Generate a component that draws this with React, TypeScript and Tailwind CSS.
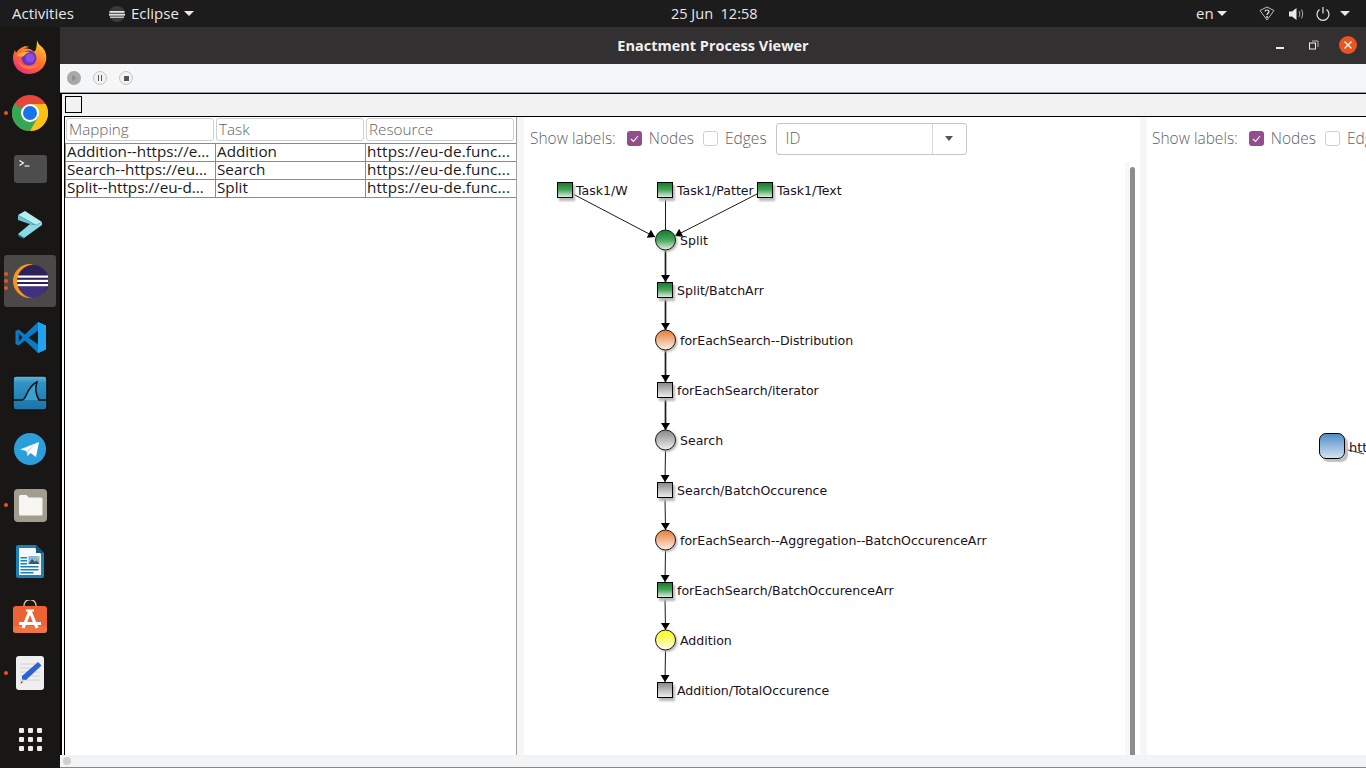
import React from "react";

const ui = { fontFamily: '"Open Sans", "Noto Sans", sans-serif' };

function Firefox() {
  return (
    <svg width="36" height="36" viewBox="0 0 36 36">
      <defs>
        <linearGradient id="ff1" x1="0.8" y1="0" x2="0.2" y2="1">
          <stop offset="0" stopColor="#ffd43a" />
          <stop offset="0.45" stopColor="#ff7a2a" />
          <stop offset="1" stopColor="#f2257a" />
        </linearGradient>
      </defs>
      <path d="M25 1c1 4 3 5 6 8 3 4 4 8 3 13-2 8-9 13-17 13C8 35 1 28 1 19c0-3 1-6 2-8l1 3c1-2 3-4 5-5 3-2 6-2 8-1-2 0-4 1-5 2 3-1 7 0 9 2 3 3 4-6 4-11z" fill="url(#ff1)" />
      <circle cx="17" cy="19" r="7.5" fill="#6a33c4" />
      <circle cx="18" cy="19" r="4.5" fill="#8a4fe0" />
      <path d="M5 16c3-3 8-4 13-3-3 1-5 2-6 4-2 1-4 1-7-1z" fill="#ffa930" />
      <path d="M6 22c1 5 6 8 11 8 4 0 8-2 10-6-3 3-7 4-11 3-4 0-7-2-10-5z" fill="#ff8a20" opacity="0.75" />
    </svg>
  );
}

function Chrome() {
  return (
    <svg width="36" height="36" viewBox="0 0 36 36">
      <circle cx="18" cy="18" r="18" fill="#e8453c" />
      <path d="M18 18 L2.4 9 A18 18 0 0 0 18 36 L 27 27 Z" fill="#34a853" />
      <path d="M18 9 L33.6 9 A18 18 0 0 1 18 36 L 26 22 Z" fill="#fbc117" />
      <circle cx="18" cy="18" r="9" fill="#fff" />
      <circle cx="18" cy="18" r="7" fill="#1a73e8" />
    </svg>
  );
}

function Terminal() {
  return (
    <div className="relative h-[28px] w-[33px] rounded-[3px] bg-[#4d4d4d]">
      <svg width="33" height="28" viewBox="0 0 33 28" className="absolute left-0 top-0">
        <path d="M5.5 5.5l4 2.5-4 2.5" stroke="#fff" strokeWidth="1.1" fill="none" />
        <path d="M10.5 11h5" stroke="#fff" strokeWidth="1.1" />
      </svg>
    </div>
  );
}

function Prompt() {
  return (
    <svg width="26" height="28" viewBox="0 0 26 28">
      <path d="M1 4L8 0L25 11L19 14z" fill="#b5edf0" />
      <path d="M1 4L19 14L11 12.500L1 9z" fill="#63c3d3" />
      <path d="M25 11V14L7 27L1 23L13 13L19 14z" fill="#86dbe6" />
      <path d="M1 23L7 27V28L1 25z" fill="#2a6f88" />
    </svg>
  );
}

function Eclipse() {
  return (
    <svg width="36" height="36" viewBox="0 0 36 36">
      <path d="M18 1A17 17 0 0 0 18 35c1 0 2 0 3-.2A17 17 0 0 1 21 1.2C20 1 19 1 18 1z" fill="#f7941e" />
      <circle cx="21" cy="18" r="16" fill="#2c2255" />
      <path d="M7 21h28a14 14 0 0 1-28 0z" fill="#473788" opacity="0.8" />
      <rect x="5.5" y="12.5" width="31" height="2.2" fill="#fff" />
      <rect x="5" y="16.8" width="32" height="2.2" fill="#fff" />
      <rect x="5.5" y="21" width="31" height="2.2" fill="#fff" />
    </svg>
  );
}

function VSCode() {
  return (
    <svg width="33" height="33" viewBox="0 0 33 33">
      <path d="M24 1L11 13.500 4.500 8.500 1.500 10v13l3 1.500 6.500-5L24 32l8-3.500V4.500z" fill="#0a7cc7" />
      <path d="M24 1l8 3.500v24L24 32z" fill="#20a3ef" />
      <path d="M24 9.500L14.500 16.500 24 23.500z" fill="#1a1a1a" />
      <path d="M4.800 12.500L8.500 16.500 4.800 20.500z" fill="#1a1a1a" />
    </svg>
  );
}

function Wireshark() {
  return (
    <svg width="36" height="36" viewBox="0 0 36 36">
      <defs>
        <linearGradient id="ws" x1="0" y1="0" x2="0" y2="1">
          <stop offset="0" stopColor="#6ab6da" />
          <stop offset="0.2" stopColor="#2f93c6" />
          <stop offset="1" stopColor="#1b74a8" />
        </linearGradient>
      </defs>
      <rect x="1" y="1" width="34" height="34" rx="3" fill="url(#ws)" stroke="#111" strokeWidth="1.600" />
      <path d="M10 25c5 0 4-13 15-18-2 6-1 13 2 18z" fill="#3ba0d2" />
      <path d="M1 25h9c5 0 4-13 15-18-2 6-1 13 2 18h8" fill="none" stroke="#111" strokeWidth="1.500" />
    </svg>
  );
}

function Telegram() {
  return (
    <svg width="32" height="32" viewBox="0 0 32 32">
      <circle cx="16" cy="16" r="16" fill="#2b9fd9" />
      <path d="M6 16.500L25 9l-3 15-5.500-4-3 3-1-5z" fill="#fff" />
      <path d="M12.500 18l9-7-7 8-1 4z" fill="#c5dff0" />
    </svg>
  );
}

function Files() {
  return (
    <div className="flex h-[33px] w-[33px] items-center justify-center rounded-[4px] bg-[#a39d90]">
      <svg width="25" height="22" viewBox="0 0 25 22">
        <path d="M1 2.500A1.500 1.500 0 0 1 2.500 1h6l2 2.500H23a1.500 1.500 0 0 1 1.500 1.500v15a1.500 1.500 0 0 1-1.500 1.500H2.500A1.500 1.500 0 0 1 1 20z" fill="#f8f6f2" />
      </svg>
    </div>
  );
}

function Writer() {
  return (
    <svg width="28" height="33" viewBox="0 0 28 33">
      <path d="M2 0h18l8 8v23a2 2 0 0 1-2 2H2a2 2 0 0 1-2-2V2a2 2 0 0 1 2-2z" fill="#1b7fb8" />
      <path d="M3 3h16l6 6v21H3z" fill="#f4f8fb" />
      <path d="M20 0l8 8h-8z" fill="#15567e" />
      <rect x="4.500" y="12" width="6.500" height="1.500" fill="#1b7fb8" />
      <rect x="4.500" y="15" width="6.500" height="1.500" fill="#1b7fb8" />
      <rect x="4.500" y="18" width="6.500" height="1.500" fill="#1b7fb8" />
      <rect x="4.500" y="21" width="18" height="1.500" fill="#1b7fb8" />
      <rect x="4.500" y="24" width="18" height="1.500" fill="#1b7fb8" />
      <rect x="4.500" y="27" width="13" height="1.500" fill="#1b7fb8" />
      <rect x="12.500" y="11" width="11" height="8" fill="#8ab8d2" />
      <path d="M12.500 19l3.500-5 3 3 1.500-1.500 3 3.500z" fill="#37576d" />
      <circle cx="22" cy="12.500" r="1" fill="#f2c230" />
    </svg>
  );
}

function Software() {
  return (
    <svg width="34" height="34" viewBox="0 0 34 34">
      <path d="M11 8V5.500a6 6 0 0 1 12 0V8" fill="none" stroke="#e3c49a" strokeWidth="1.300" />
      <rect x="0" y="6" width="34" height="27" rx="3" fill="#ec6232" />
      <rect x="0" y="26" width="34" height="7" rx="3" fill="#f2814f" opacity="0.6" />
      <path d="M17 11L10 28M17 11l7 17" stroke="#fff" strokeWidth="3.200" fill="none" />
      <path d="M6 23.500h22" stroke="#fff" strokeWidth="3" />
      <path d="M13 10.500h8" stroke="#fff" strokeWidth="2" />
    </svg>
  );
}

function Editor() {
  return (
    <svg width="28" height="34" viewBox="0 0 28 34">
      <rect x="0" y="0" width="28" height="34" rx="3" fill="#efefef" />
      <path d="M4 8h20M4 12h20M4 16h20M4 20h20M4 24h20" stroke="#d2d2d2" strokeWidth="1" />
      <path d="M22 6l3.500 3.500L10 24l-4-.5L6 20z" fill="#2a62d8" />
      <path d="M6 23.500l-1.500 4 4-1.500z" fill="#e9c88a" />
      <path d="M4.500 27.500l.7-2 1.300 1.300z" fill="#333" />
    </svg>
  );
}

function DockItem({ children, dots = 0, active = false }: { children: React.ReactNode; dots?: number; active?: boolean }) {
  return (
    <div className={`relative flex h-[52px] w-[52px] items-center justify-center rounded-[3px] ${active ? "bg-[#4a4947]" : ""}`}>
      {dots > 0 && (
        <div className="absolute left-0 top-1/2 flex -translate-y-1/2 flex-col gap-[3px]">
          {Array.from({ length: dots }).map((_, i) => (
            <span key={i} className="h-[4px] w-[4px] rounded-full bg-[#e95420]" />
          ))}
        </div>
      )}
      {children}
    </div>
  );
}

function Dock() {
  return (
    <aside className="flex w-[60px] shrink-0 flex-col items-center bg-[#181716] pt-[4px]">
      <div className="flex flex-col gap-[4px]">
        <DockItem><Firefox /></DockItem>
        <DockItem dots={1}><Chrome /></DockItem>
        <DockItem><Terminal /></DockItem>
        <DockItem><Prompt /></DockItem>
        <DockItem dots={3} active><Eclipse /></DockItem>
        <DockItem><VSCode /></DockItem>
        <DockItem><Wireshark /></DockItem>
        <DockItem><Telegram /></DockItem>
        <DockItem dots={1}><Files /></DockItem>
        <DockItem><Writer /></DockItem>
        <DockItem><Software /></DockItem>
        <DockItem dots={1}><Editor /></DockItem>
      </div>
      <div className="mt-[29px] grid grid-cols-3 gap-[4px]">
        {Array.from({ length: 9 }).map((_, i) => (
          <span key={i} className="h-[5px] w-[5px] rounded-[1px] bg-[#eeeeee]" />
        ))}
      </div>
    </aside>
  );
}

function Caret() {
  return <span className="h-0 w-0 border-x-[5px] border-t-[5px] border-x-transparent border-t-[#e8e8e8]" />;
}

function TopBar() {
  return (
    <header className="relative flex h-[27px] shrink-0 items-center bg-[#1c1c1c] text-[15px] text-[#e8e8e8]" style={ui}>
      <span className="ml-[12px] w-[63px]">Activities</span>
      <svg width="18" height="18" viewBox="0 0 18 18" className="ml-[33px]">
        <circle cx="9" cy="9" r="8" fill="#3a3a3a" />
        <rect x="1.500" y="6" width="15" height="1.800" fill="#e0e0e0" />
        <rect x="1" y="8.800" width="16" height="1.800" fill="#e0e0e0" />
        <rect x="2" y="11.500" width="14" height="1.500" fill="#c0c0c0" />
      </svg>
      <span className="ml-[5px]">Eclipse</span>
      <span className="ml-[5px] flex"><Caret /></span>
      <span className="absolute left-[671px] top-[3px] text-[14.500px]">25 Jun&nbsp;&nbsp;12:58</span>
      <div className="ml-auto flex items-center">
        <span className="w-[16px]">en</span>
        <span className="ml-[5px] flex"><Caret /></span>
        <svg width="16" height="15" viewBox="0 0 16 15" className="ml-[32px]">
          <path d="M1 4.500L8 1l7 3.500L8 14z" fill="none" stroke="#bdbdbd" strokeWidth="1" />
          <path d="M6 5.500c0-2 4-2 4 0 0 1.500-2 1.500-2 3.500" fill="none" stroke="#eeeeee" strokeWidth="1.200" />
          <circle cx="8" cy="11" r="0.900" fill="#eeeeee" />
        </svg>
        <svg width="16" height="14" viewBox="0 0 16 14" className="ml-[13px]">
          <path d="M1 4.500h3L8.500 1v12L4 9.500H1z" fill="#e8e8e8" />
          <path d="M11 4c1 2 1 4 0 6M13.500 2.500c1.500 3 1.500 6 0 9" stroke="#9a9a9a" fill="none" strokeWidth="1.100" />
        </svg>
        <svg width="14" height="14" viewBox="0 0 14 14" className="ml-[12px]">
          <path d="M3.500 2.500a6 6 0 1 0 7 0" stroke="#e8e8e8" fill="none" strokeWidth="1.200" />
          <path d="M7 0v6.500" stroke="#e8e8e8" strokeWidth="1.200" />
        </svg>
        <span className="ml-[10px] mr-[16px] flex"><Caret /></span>
      </div>
    </header>
  );
}

function TitleBar() {
  return (
    <div className="relative flex h-[37px] shrink-0 items-center justify-center bg-[#323030] text-[14.500px] font-bold text-[#f0f0f0]" style={ui}>
      <span>Enactment Process Viewer</span>
      <span className="absolute left-[1216px] top-[20px] h-[1.500px] w-[8px] bg-[#f0f0f0]" />
      <svg width="10" height="10" viewBox="0 0 10 10" className="absolute left-[1249px] top-[13px]">
        <rect x="0.500" y="3" width="6" height="6" fill="none" stroke="#f0f0f0" />
        <path d="M3 1h6v6" fill="none" stroke="#bdbdbd" />
      </svg>
      <span className="absolute left-[1279px] top-[9px] flex h-[18px] w-[18px] items-center justify-center rounded-full bg-[#e95420]">
        <svg width="8" height="8" viewBox="0 0 8 8"><path d="M0.500 0.500l7 7M7.500 0.500l-7 7" stroke="#fff" strokeWidth="1.300" /></svg>
      </span>
    </div>
  );
}

function RoundBtn({ variant }: { variant: "play" | "pause" | "stop" }) {
  if (variant === "play") {
    return (
      <span className="flex h-[14px] w-[14px] items-center justify-center rounded-full bg-[#a9a9a9]">
        <span className="ml-[1px] h-0 w-0 border-y-[3px] border-l-[5px] border-y-transparent border-l-[#8f8f8f]" />
      </span>
    );
  }
  return (
    <span className="flex h-[14px] w-[14px] items-center justify-center rounded-full border border-[#c4c4c4] bg-[#f2f2f2]">
      {variant === "pause" ? (
        <span className="flex gap-[1.500px]">
          <span className="h-[6px] w-[1.500px] bg-[#555]" />
          <span className="h-[6px] w-[1.500px] bg-[#555]" />
        </span>
      ) : (
        <span className="h-[5px] w-[5px] bg-[#555]" />
      )}
    </span>
  );
}

function Toolbar() {
  return (
    <div className="flex h-[29px] shrink-0 items-center gap-[12px] border-b border-[#9a9a9a] bg-[#f5f6f7] pl-[7px]">
      <RoundBtn variant="play" />
      <RoundBtn variant="pause" />
      <RoundBtn variant="stop" />
    </div>
  );
}

const headers = ["Mapping", "Task", "Resource"];
const rows = [
  ["Addition--https://e...", "Addition", "https://eu-de.func..."],
  ["Search--https://eu...", "Search", "https://eu-de.func..."],
  ["Split--https://eu-d...", "Split", "https://eu-de.func..."],
];

function TablePanel() {
  return (
    <div className="flex w-[452px] shrink-0 flex-col border-r border-[#a0a0a0] bg-white text-[15.250px] leading-none" style={ui}>
      <div className="flex h-[26px] shrink-0 items-start gap-[2px] pl-[1px] pt-[1px]">
        {headers.map((h) => (
          <div key={h} className="flex h-[23px] w-[148px] items-center rounded-[3px] border border-[#cdd0d4] pl-[2px] font-light text-[#5f5f66]">
            {h}
          </div>
        ))}
      </div>
      <div className="border-b border-[#8a8a8a]">
        {rows.map((r, i) => (
          <div key={i} className="flex h-[18px] border-t border-[#8a8a8a] text-[#1a1a1a]">
            <div className="flex h-[17px] w-[150px] items-center whitespace-nowrap border-l border-[#8a8a8a] pb-[2px] pl-[1px]">{r[0]}</div>
            <div className="flex h-[17px] w-[150px] items-center whitespace-nowrap border-l border-[#8a8a8a] pb-[2px] pl-[1px]">{r[1]}</div>
            <div className="flex h-[17px] w-[151px] items-center whitespace-nowrap border-l border-[#8a8a8a] pb-[2px] pl-[1px] tracking-[0.15px]">{r[2]}</div>
          </div>
        ))}
      </div>
    </div>
  );
}

function LabelCheck({ checked, label }: { checked: boolean; label: string }) {
  return (
    <span className="flex items-center">
      <span className={`flex h-[15px] w-[15px] items-center justify-center rounded-[3px] ${checked ? "bg-[#924d8b]" : "border border-[#cdd0d4] bg-white"}`}>
        {checked && (
          <svg width="9" height="8" viewBox="0 0 9 8"><path d="M1 4l2.500 2.500L8 1" stroke="#fff" strokeWidth="1.100" fill="none" /></svg>
        )}
      </span>
      <span className="ml-[7px]">{label}</span>
    </span>
  );
}

type NodeDef = { x: number; y: number; kind: "s" | "c"; fill: string; label: string; lx: number };

const nodes: NodeDef[] = [
  { x: 41, y: 190, kind: "s", fill: "g", label: "Task1/W", lx: 52 },
  { x: 141, y: 190, kind: "s", fill: "g", label: "Task1/Patter", lx: 153 },
  { x: 241, y: 190, kind: "s", fill: "g", label: "Task1/Text", lx: 253 },
  { x: 141.500, y: 240, kind: "c", fill: "g", label: "Split", lx: 156 },
  { x: 141, y: 290, kind: "s", fill: "g", label: "Split/BatchArr", lx: 153 },
  { x: 141.500, y: 340, kind: "c", fill: "o", label: "forEachSearch--Distribution", lx: 156 },
  { x: 141, y: 390, kind: "s", fill: "w", label: "forEachSearch/iterator", lx: 153 },
  { x: 141.500, y: 440, kind: "c", fill: "w", label: "Search", lx: 156 },
  { x: 141, y: 490, kind: "s", fill: "w", label: "Search/BatchOccurence", lx: 153 },
  { x: 141.500, y: 540, kind: "c", fill: "o", label: "forEachSearch--Aggregation--BatchOccurenceArr", lx: 156 },
  { x: 141, y: 590, kind: "s", fill: "g", label: "forEachSearch/BatchOccurenceArr", lx: 153 },
  { x: 141.500, y: 640, kind: "c", fill: "y", label: "Addition", lx: 156 },
  { x: 141, y: 690, kind: "s", fill: "w", label: "Addition/TotalOccurence", lx: 153 },
];

const edges: [number, number, number, number, number, boolean][] = [
  [49, 194, 131, 237, 1, true],
  [141.500, 197, 141.500, 231, 1, false],
  [233, 194, 151, 236, 1, true],
  [141.500, 250, 141.500, 282, 1.700, true],
  [141.500, 298, 141.500, 330, 1.700, true],
  [141.500, 350, 141.500, 382, 1.700, true],
  [141.500, 398, 141.500, 430, 1.700, true],
  [141.500, 450, 141, 482, 1, true],
  [141, 498, 141.500, 530, 1, true],
  [141.500, 550, 141, 582, 1, true],
  [141, 598, 141.500, 630, 1, true],
  [141.500, 650, 141, 682, 1, true],
];

function arrow(x1: number, y1: number, x2: number, y2: number) {
  const a = Math.atan2(y2 - y1, x2 - x1);
  const l = 7;
  const w = 4.500;
  const bx = x2 - l * Math.cos(a);
  const by = y2 - l * Math.sin(a);
  const px = -Math.sin(a) * w;
  const py = Math.cos(a) * w;
  return `${x2},${y2} ${bx + px},${by + py} ${bx - px},${by - py}`;
}

function Graph() {
  return (
    <svg width="600" height="638" viewBox="0 117 600 638" className="absolute left-0 top-0" style={{ fontFamily: '"DejaVu Sans", sans-serif' }}>
      <defs>
        <linearGradient id="gg" x1="0" y1="0" x2="0" y2="1"><stop offset="0" stopColor="#0f7a2a" /><stop offset="0.5" stopColor="#4aa55e" /><stop offset="1" stopColor="#e4f2e6" /></linearGradient>
        <linearGradient id="go" x1="0" y1="0" x2="0" y2="1"><stop offset="0" stopColor="#e57a35" /><stop offset="1" stopColor="#fdf1e6" /></linearGradient>
        <linearGradient id="gw" x1="0" y1="0" x2="0" y2="1"><stop offset="0" stopColor="#868686" /><stop offset="1" stopColor="#f0f0f0" /></linearGradient>
        <linearGradient id="gy" x1="0" y1="0" x2="0" y2="1"><stop offset="0" stopColor="#fbfb10" /><stop offset="1" stopColor="#fdfde8" /></linearGradient>
        <filter id="sh" x="-30%" y="-30%" width="160%" height="160%"><feGaussianBlur stdDeviation="0.800" /></filter>
      </defs>
      {edges.map(([a, b, c, d, w, head], i) => (
        <g key={i}>
          <line x1={a} y1={b} x2={c} y2={d} stroke="#1a1a1a" strokeWidth={w} />
          {head && <polygon points={arrow(a, b, c, d)} fill="#000" />}
        </g>
      ))}
      {nodes.map((n) => (
        <g key={n.label + n.y}>
          {n.kind === "s" ? (
            <>
              <rect x={n.x - 6} y={n.y - 5} width="16" height="16" fill="#b8b8b8" filter="url(#sh)" />
              <rect x={n.x - 7.5} y={n.y - 7.5} width="15" height="15" fill={`url(#g${n.fill})`} stroke="#000" />
            </>
          ) : (
            <>
              <circle cx={n.x + 1.500} cy={n.y + 1.500} r="10.500" fill="#b8b8b8" filter="url(#sh)" />
              <circle cx={n.x} cy={n.y} r="10" fill={`url(#g${n.fill})`} stroke="#1a1a1a" />
            </>
          )}
        </g>
      ))}
      {nodes.map((n) => (
        <text key={"t" + n.label} x={n.lx} y={n.y + 4.500} fontSize="12.550" fill="#1a1020">
          {n.label}
        </text>
      ))}
    </svg>
  );
}

function LabelsBar({ children }: { children?: React.ReactNode }) {
  return (
    <div className="flex h-[43px] items-center whitespace-nowrap pl-[6px] text-[15.500px] font-light text-[#5f5f66]">
      <span>Show labels:</span>
      <span className="ml-[11px]"><LabelCheck checked label="Nodes" /></span>
      <span className="ml-[9px]"><LabelCheck checked={false} label="Edges" /></span>
      {children}
    </div>
  );
}

function GraphPanel() {
  return (
    <div className="relative h-full w-[616px] shrink-0 overflow-hidden bg-white" style={ui}>
      <Graph />
      <div className="relative">
        <LabelsBar>
          <div className="ml-[9px] flex h-[32px] w-[191px] items-center rounded-[3px] border border-[#c4c6c9] bg-white pl-[9px]">
            <span className="flex-1">ID</span>
            <span className="flex h-full w-[34px] items-center justify-center border-l border-[#d6d8da]">
              <span className="h-0 w-0 border-x-[4.500px] border-t-[5px] border-x-transparent border-t-[#555]" />
            </span>
          </div>
        </LabelsBar>
      </div>
      <div className="absolute bottom-0 left-[601px] top-[45px] w-[5px] bg-[#f7f7f8]" />
      <div className="absolute bottom-0 left-[606px] top-[50px] w-[5px] rounded-t-[3px] bg-[#8c8c8c]" />
    </div>
  );
}

function SecondPanel() {
  return (
    <div className="relative h-full min-w-0 flex-1 overflow-hidden bg-white" style={ui}>
      <div className="-ml-[1px]">
        <LabelsBar />
      </div>
      <svg width="20" height="10" viewBox="0 0 20 10" className="absolute left-[197px] top-[332px]">
        <path d="M0 0l20 5" stroke="#444" strokeWidth="1" />
      </svg>
      <div className="absolute left-[172px] top-[316px] h-[26px] w-[26px] rounded-[7px] border border-black bg-gradient-to-b from-[#4f8dc4] to-[#d4e3f1] shadow-[3px_3px_1px_#c0c0c0]" />
      <span className="absolute left-[202px] top-[321px] whitespace-nowrap text-[13px] text-[#1a1020]" style={{ fontFamily: '"DejaVu Sans", sans-serif' }}>https://eu-de</span>
    </div>
  );
}

export default function App() {
  return (
    <div className="flex h-[768px] w-[1366px] flex-col overflow-hidden bg-[#181716]">
      <TopBar />
      <div className="flex min-h-0 flex-1">
        <Dock />
        <main className="flex min-w-0 flex-1 flex-col">
          <TitleBar />
          <Toolbar />
          <div className="flex min-h-0 flex-1 flex-col border-l-2 border-t border-black bg-white">
            <div className="flex h-[22px] shrink-0 items-start bg-[#f2f2f2] pl-[3px] pt-[2px]">
              <span className="h-[17px] w-[17px] border border-black" />
            </div>
            <div className="ml-[2px] flex min-h-0 flex-1 border-l border-t border-black bg-[#f5f6f7]">
              <TablePanel />
              <div className="w-[7px] shrink-0" />
              <GraphPanel />
              <div className="w-[7px] shrink-0" />
              <SecondPanel />
            </div>
          </div>
          <div className="flex h-[13px] shrink-0 items-center border-b border-[#888] bg-[#f2f3f5]">
            <span className="ml-[3px] h-[8px] w-[8px] rounded-full bg-[#cfcfcf]" />
          </div>
        </main>
      </div>
    </div>
  );
}
